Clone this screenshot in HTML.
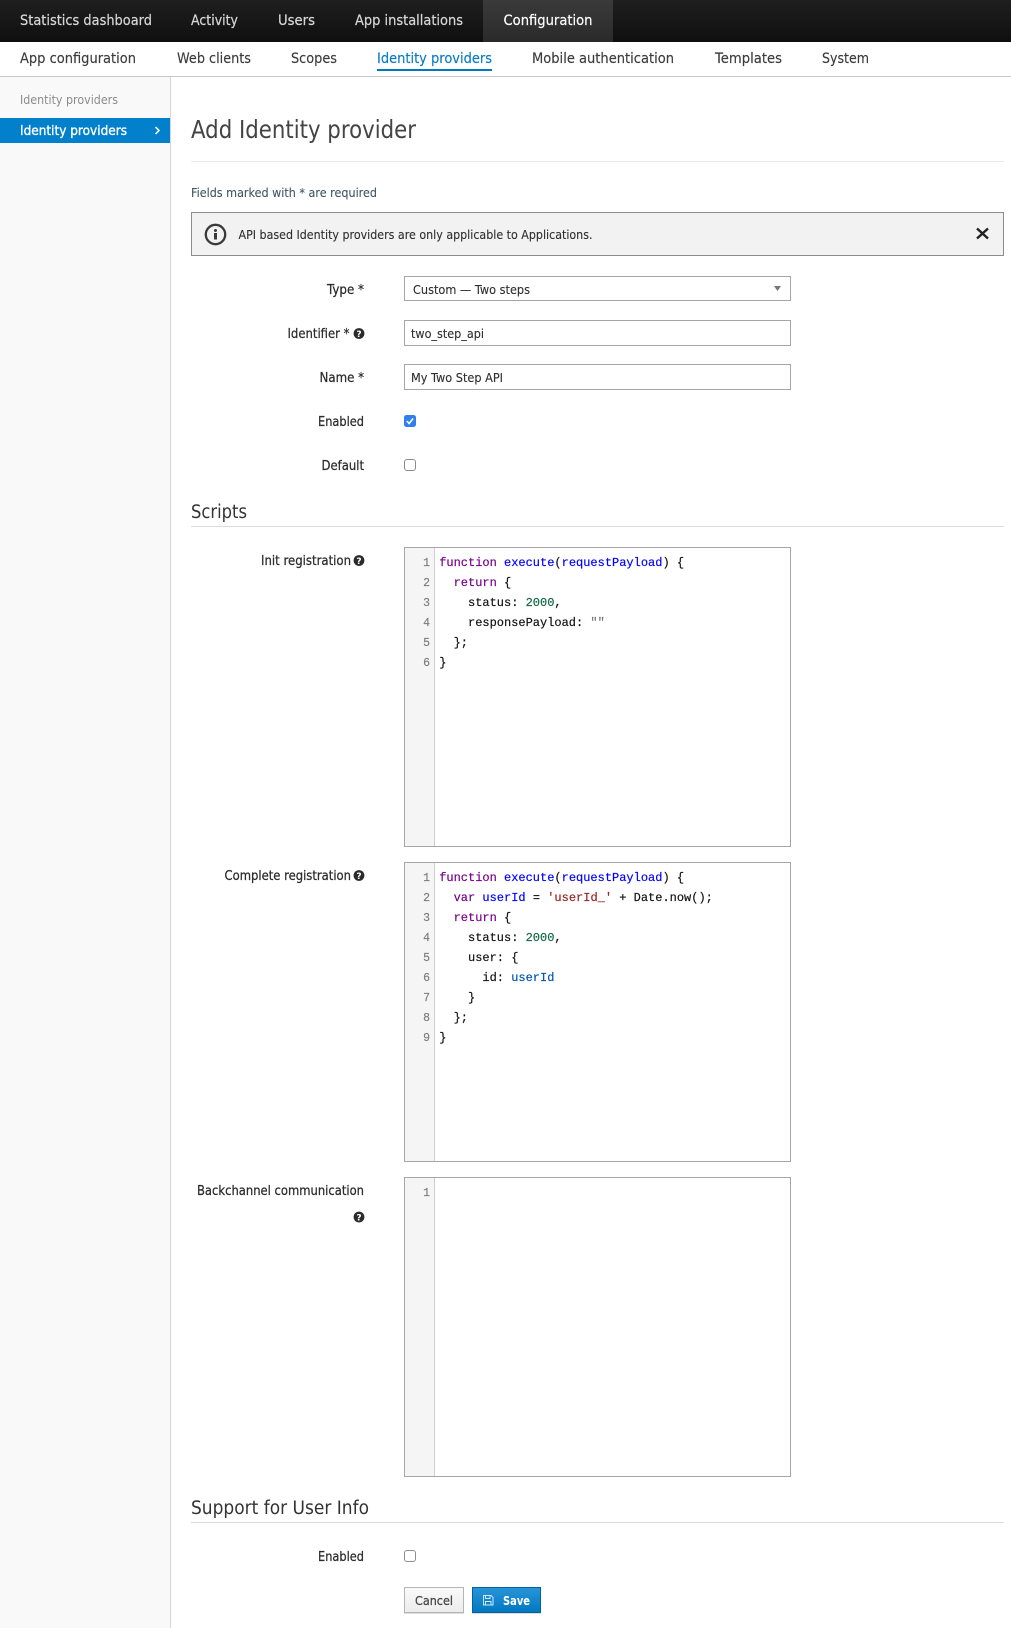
<!DOCTYPE html>
<html lang="en">
<head>
<meta charset="utf-8">
<title>Add Identity provider</title>
<style>
html,body{margin:0;padding:0;background:#fff;width:1011px;height:1628px;overflow:hidden}
svg{display:block}
text{font-family:"DejaVu Sans","Liberation Sans",sans-serif;font-size:14px;fill:#333}
.nav{fill:#d8d8d8;font-size:14.5px;stroke:#d8d8d8;stroke-width:.2}
.sub{fill:#3c3c3c;font-size:14.5px;stroke:#3c3c3c;stroke-width:.15}
.f{font-size:13.5px;fill:#2b2b2b;stroke:#2b2b2b;stroke-width:.25}
.t{font-size:12.5px;fill:#2e2e2e;stroke:#2e2e2e;stroke-width:.12}
.code text,.code tspan{font-family:"Liberation Mono",monospace;font-size:12px;white-space:pre}
.code text{fill:#111;stroke:#111;stroke-width:.18}
.ln text{font-family:"Liberation Mono",monospace;font-size:11.5px;fill:#7c7c7c;stroke:#7c7c7c;stroke-width:.15;text-anchor:end}
.k{fill:#708;stroke:#708}.d{fill:#00f;stroke:#00f}.v{fill:#05a;stroke:#05a}.n{fill:#164;stroke:#164}.s{fill:#922;stroke:#922}.g{fill:#777;stroke:#777}
.box{fill:#fff;stroke:#a6a6a6;stroke-width:1}
.gut{fill:#f5f5f5}
.gl{stroke:#cfcfcf;stroke-width:1}
.h2{font-size:18.5px;fill:#333}
</style>
</head>
<body>
<svg xmlns="http://www.w3.org/2000/svg" width="1011" height="1628" viewBox="0 0 1011 1628">
<defs>
<linearGradient id="top" x1="0" y1="0" x2="0" y2="1"><stop offset="0" stop-color="#1f1f1f"/><stop offset="1" stop-color="#0f0f0f"/></linearGradient>
<linearGradient id="act" x1="0" y1="0" x2="0" y2="1"><stop offset="0" stop-color="#3a3a3a"/><stop offset="1" stop-color="#2a2a2a"/></linearGradient>
<linearGradient id="sv" x1="0" y1="0" x2="0" y2="1"><stop offset="0" stop-color="#2a95d8"/><stop offset="1" stop-color="#0078c1"/></linearGradient>
<linearGradient id="cn" x1="0" y1="0" x2="0" y2="1"><stop offset="0" stop-color="#fafafa"/><stop offset="1" stop-color="#ececec"/></linearGradient>
<g id="help"><circle r="5.400" fill="#2b2b2b"/><text x="0" y="3.400" text-anchor="middle" style="font-size:9px;font-weight:bold;fill:#fff">?</text></g>
</defs>

<!-- top nav -->
<rect width="1011" height="42" fill="url(#top)"/>
<rect x="483" width="130" height="42" fill="url(#act)"/>
<text class="nav" x="20" y="25" textLength="132" lengthAdjust="spacingAndGlyphs">Statistics dashboard</text>
<text class="nav" x="191" y="25" textLength="47" lengthAdjust="spacingAndGlyphs">Activity</text>
<text class="nav" x="278" y="25" textLength="37" lengthAdjust="spacingAndGlyphs">Users</text>
<text class="nav" x="355" y="25" textLength="108" lengthAdjust="spacingAndGlyphs">App installations</text>
<text class="nav" x="503.500" y="25" textLength="89" lengthAdjust="spacingAndGlyphs" style="fill:#fff;stroke:#fff">Configuration</text>

<!-- sub nav -->
<rect y="76" width="1011" height="1" fill="#c8c8c8"/>
<text class="sub" x="20" y="63" textLength="116" lengthAdjust="spacingAndGlyphs">App configuration</text>
<text class="sub" x="177" y="63" textLength="74" lengthAdjust="spacingAndGlyphs">Web clients</text>
<text class="sub" x="291" y="63" textLength="46" lengthAdjust="spacingAndGlyphs">Scopes</text>
<text class="sub" x="377" y="63" textLength="115" lengthAdjust="spacingAndGlyphs" style="fill:#0a7cc4;stroke:#0a7cc4">Identity providers</text>
<rect x="377" y="69" width="115" height="2" fill="#0079c1"/>
<text class="sub" x="532" y="63" textLength="142" lengthAdjust="spacingAndGlyphs">Mobile authentication</text>
<text class="sub" x="715" y="63" textLength="67" lengthAdjust="spacingAndGlyphs">Templates</text>
<text class="sub" x="822" y="63" textLength="47" lengthAdjust="spacingAndGlyphs">System</text>

<!-- sidebar -->
<rect y="77" width="170" height="1551" fill="#f9f9f9"/>
<rect x="170" y="77" width="1" height="1551" fill="#d4d4d4"/>
<text x="20" y="104" textLength="98" lengthAdjust="spacingAndGlyphs" style="font-size:12.500px;fill:#8c8c8c">Identity providers</text>
<rect y="118" width="170" height="25" fill="#0280cb"/>
<text x="20" y="135" textLength="107" lengthAdjust="spacingAndGlyphs" style="font-size:13.500px;fill:#fff;stroke:#fff;stroke-width:.35">Identity providers</text>
<path d="M155.500 127l3.500 3.500-3.500 3.500" fill="none" stroke="#fff" stroke-width="1.500"/>

<!-- heading -->
<text x="191" y="138" textLength="225" lengthAdjust="spacingAndGlyphs" style="font-size:24.500px;fill:#444">Add Identity provider</text>
<rect x="191" y="161" width="813" height="1" fill="#ececec"/>
<text x="191" y="197" textLength="186" lengthAdjust="spacingAndGlyphs" style="font-size:12.500px;fill:#3e5665;stroke:#3e5665;stroke-width:.1">Fields marked with * are required</text>

<!-- alert -->
<rect x="191.500" y="212.500" width="812" height="43" fill="#f2f2f2" stroke="#8c8c8c"/>
<circle cx="215.500" cy="234.500" r="9.700" fill="none" stroke="#3a3a3a" stroke-width="2.300"/>
<circle cx="215.500" cy="230.500" r="1.500" fill="#3a3a3a"/>
<rect x="214" y="233" width="3" height="6.500" fill="#3a3a3a"/>
<text class="t" x="238.500" y="239" textLength="354" lengthAdjust="spacingAndGlyphs">API based Identity providers are only applicable to Applications.</text>
<path d="M977 228.500l11 10M988 228.500l-11 10" stroke="#222" stroke-width="2.400" fill="none"/>

<!-- form -->
<text class="f" x="327" y="294" textLength="37" lengthAdjust="spacingAndGlyphs">Type *</text>
<rect class="box" x="404.500" y="276.500" width="386" height="24"/>
<text class="t" x="413" y="294" textLength="117" lengthAdjust="spacingAndGlyphs">Custom — Two steps</text>
<path d="M774 286h7l-3.500 5z" fill="#777"/>

<text class="f" x="287.500" y="338" textLength="62" lengthAdjust="spacingAndGlyphs">Identifier *</text>
<use href="#help" x="359" y="333.500"/>
<rect class="box" x="404.500" y="320.500" width="386" height="25"/>
<text class="t" x="411" y="338" textLength="73" lengthAdjust="spacingAndGlyphs">two_step_api</text>

<text class="f" x="319.500" y="382" textLength="44.500" lengthAdjust="spacingAndGlyphs">Name *</text>
<rect class="box" x="404.500" y="364.500" width="386" height="25"/>
<text class="t" x="411" y="382" textLength="92" lengthAdjust="spacingAndGlyphs">My Two Step API</text>

<text class="f" x="318" y="426" textLength="46" lengthAdjust="spacingAndGlyphs">Enabled</text>
<rect x="404" y="415" width="12" height="12" rx="2.500" fill="#2f80ed"/>
<path d="M406.800 421l2.300 2.500 4-5" fill="none" stroke="#fff" stroke-width="1.600"/>

<text class="f" x="321.500" y="470" textLength="42.500" lengthAdjust="spacingAndGlyphs">Default</text>
<rect x="404.500" y="459.500" width="11" height="11" rx="2.500" fill="#fff" stroke="#8e8e8e"/>

<text class="h2" x="191" y="518" textLength="56" lengthAdjust="spacingAndGlyphs">Scripts</text>
<rect x="191" y="526" width="813" height="1" fill="#dcdcdc"/>

<!-- editor 1 -->
<text class="f" x="261" y="565" textLength="90" lengthAdjust="spacingAndGlyphs" style="font-size:13px">Init registration</text>
<use href="#help" x="359" y="560.500"/>
<rect class="box" x="404.500" y="547.500" width="386" height="299"/>
<rect class="gut" x="405" y="548" width="29" height="298"/>
<line class="gl" x1="434.500" y1="548" x2="434.500" y2="846"/>
<g class="ln"><text x="430" y="566">1</text><text x="430" y="586">2</text><text x="430" y="606">3</text><text x="430" y="626">4</text><text x="430" y="646">5</text><text x="430" y="666">6</text></g>
<g class="code">
<text x="439.200" y="566"><tspan class="k">function</tspan> <tspan class="d">execute</tspan>(<tspan class="d">requestPayload</tspan>) {</text>
<text x="439.200" y="586">  <tspan class="k">return</tspan> {</text>
<text x="439.200" y="606">    status: <tspan class="n">2000</tspan>,</text>
<text x="439.200" y="626">    responsePayload: <tspan class="g">""</tspan></text>
<text x="439.200" y="646">  };</text>
<text x="439.200" y="666">}</text>
</g>

<!-- editor 2 -->
<text class="f" x="224.500" y="880" textLength="126.500" lengthAdjust="spacingAndGlyphs" style="font-size:13px">Complete registration</text>
<use href="#help" x="359" y="875.500"/>
<rect class="box" x="404.500" y="862.500" width="386" height="299"/>
<rect class="gut" x="405" y="863" width="29" height="298"/>
<line class="gl" x1="434.500" y1="863" x2="434.500" y2="1161"/>
<g class="ln"><text x="430" y="881">1</text><text x="430" y="901">2</text><text x="430" y="921">3</text><text x="430" y="941">4</text><text x="430" y="961">5</text><text x="430" y="981">6</text><text x="430" y="1001">7</text><text x="430" y="1021">8</text><text x="430" y="1041">9</text></g>
<g class="code">
<text x="439.200" y="881"><tspan class="k">function</tspan> <tspan class="d">execute</tspan>(<tspan class="d">requestPayload</tspan>) {</text>
<text x="439.200" y="901">  <tspan class="k">var</tspan> <tspan class="d">userId</tspan> = <tspan class="s">'userId_'</tspan> + Date.now();</text>
<text x="439.200" y="921">  <tspan class="k">return</tspan> {</text>
<text x="439.200" y="941">    status: <tspan class="n">2000</tspan>,</text>
<text x="439.200" y="961">    user: {</text>
<text x="439.200" y="981">      id: <tspan class="v">userId</tspan></text>
<text x="439.200" y="1001">    }</text>
<text x="439.200" y="1021">  };</text>
<text x="439.200" y="1041">}</text>
</g>

<!-- editor 3 -->
<text class="f" x="197" y="1195" textLength="167" lengthAdjust="spacingAndGlyphs" style="font-size:13px">Backchannel communication</text>
<use href="#help" x="359" y="1217"/>
<rect class="box" x="404.500" y="1177.500" width="386" height="299"/>
<rect class="gut" x="405" y="1178" width="29" height="298"/>
<line class="gl" x1="434.500" y1="1178" x2="434.500" y2="1476"/>
<g class="ln"><text x="430" y="1196">1</text></g>

<!-- support -->
<text class="h2" x="191" y="1514" textLength="178" lengthAdjust="spacingAndGlyphs">Support for User Info</text>
<rect x="191" y="1522" width="813" height="1" fill="#dcdcdc"/>
<text class="f" x="318" y="1561" textLength="46" lengthAdjust="spacingAndGlyphs">Enabled</text>
<rect x="404.500" y="1550.500" width="11" height="11" rx="2.500" fill="#fff" stroke="#8e8e8e"/>

<!-- buttons -->
<rect x="404" y="1588" width="60" height="26" fill="#ddd"/>
<rect x="404.500" y="1587.500" width="59" height="25" fill="url(#cn)" stroke="#b5b5b5"/>
<text x="415" y="1605" textLength="38" lengthAdjust="spacingAndGlyphs" style="font-size:12.500px;fill:#444;stroke:#444;stroke-width:.25">Cancel</text>
<rect x="472" y="1588" width="69" height="26" fill="#ddd"/>
<rect x="472.500" y="1587.500" width="68" height="25" fill="url(#sv)" stroke="#05609f"/>
<path d="M483.500 1595.500h7.500l2 2v7.500h-9.500zM485.500 1595.500v3h4.500v-3M485.500 1605v-3.500h5.500v3.500" fill="none" stroke="#cfe6f6" stroke-width="1"/>
<text x="503" y="1605" textLength="27" lengthAdjust="spacingAndGlyphs" style="font-size:12.500px;fill:#fff;font-weight:bold">Save</text>
</svg>
</body>
</html>
